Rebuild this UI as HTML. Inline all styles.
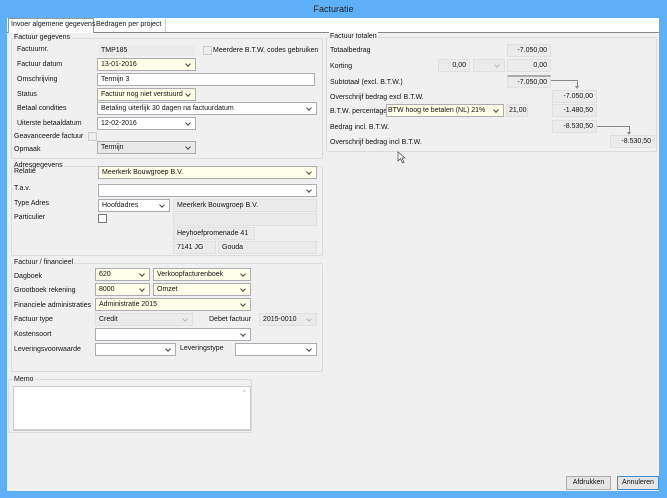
<!DOCTYPE html>
<html><head><meta charset="utf-8"><style>
*{box-sizing:border-box;margin:0;padding:0;white-space:nowrap}
body{width:667px;height:498px;background:#5eb0f6;font-family:"Liberation Sans",sans-serif;font-size:7px;color:#111;position:relative;overflow:hidden}
.a{position:absolute}
.title{left:0;top:0;width:667px;height:18px;text-align:center;line-height:18px;font-size:9px;color:#222}
.tabs{left:7px;top:18px;width:652px;height:14px;background:#fff}
.panel{left:7px;top:32px;width:652px;height:459px;background:#f0f0f0;border-top:1px solid #888}
.tab{top:19px;height:13px;line-height:12px;padding-left:2px;font-size:7px}
.grp{border:1px solid #dcdcdc;border-radius:2px}
.gl{font-size:7px;background:#f0f0f0;padding:0 1px;line-height:9px}
.l{font-size:7px;line-height:10px}
.in{background:#fff;border:1px solid #abadb3;height:13px;line-height:11px;padding-left:3px;font-size:7px;overflow:hidden}
.y{background:#fffee8}
.d{background:#ebebeb;border-color:#e0e0e0}
.r{text-align:right;padding-right:3px}
.sel{padding-right:12px}
.sel::after{content:"";position:absolute;right:5px;top:3px;width:3px;height:3px;border-right:1px solid #444;border-bottom:1px solid #444;transform:rotate(45deg)}
.sel.dd::after{border-color:#bbb}
.cb{width:9px;height:9px;border:1px solid #777;background:#fff}
.cbd{border-color:#ccc;background:#eee}
.btn{height:14px;border:1px solid #adadad;background:#e5e5e5;text-align:center;line-height:12px;font-size:7px}
.ln{background:#888}
</style></head><body>
<div class="a title">Facturatie</div>
<div class="a tabs"></div>
<div class="a panel"></div>
<div class="a tab" style="left:8px;width:86px;background:#fff;border:1px solid #999;border-bottom:none;top:18px;height:15px">Invoer algemene gegevens</div>
<div class="a tab" style="left:94px;width:72px;border-right:1px solid #ccc">Bedragen per project</div>

<div class="a grp" style="left:11px;top:38px;width:312px;height:121px"></div>
<div class="a gl" style="left:13px;top:33px">Factuur gegevens</div>
<div class="a l" style="left:17px;top:45px">Factuurnr.</div>
<div class="a in d" style="left:97px;top:44px;width:99px;border-color:#f0f0f0;background:#ebebeb">TMP185</div>
<div class="a cb cbd" style="left:203px;top:46px"></div>
<div class="a l" style="left:213px;top:46px">Meerdere B.T.W. codes gebruiken</div>
<div class="a l" style="left:17px;top:60px">Factuur datum</div>
<div class="a in y sel" style="left:97px;top:58px;width:99px">13-01-2016</div>
<div class="a l" style="left:17px;top:75px">Omschrijving</div>
<div class="a in" style="left:97px;top:73px;width:218px">Termijn 3</div>
<div class="a l" style="left:17px;top:90px">Status</div>
<div class="a in y sel" style="left:97px;top:88px;width:99px">Factuur nog niet verstuurd</div>
<div class="a l" style="left:17px;top:104px">Betaal condities</div>
<div class="a in sel" style="left:97px;top:102px;width:220px">Betaling uiterlijk 30 dagen na factuurdatum</div>
<div class="a l" style="left:17px;top:119px">Uiterste betaaldatum</div>
<div class="a in sel" style="left:97px;top:117px;width:99px">12-02-2016</div>
<div class="a l" style="left:14px;top:132px">Geavanceerde factuur</div>
<div class="a cb cbd" style="left:88px;top:132px"></div>
<div class="a l" style="left:14px;top:145px">Opmaak</div>
<div class="a in d sel" style="left:97px;top:141px;width:99px;background:#e8e8e8;border-color:#acacac">Termijn</div>

<div class="a grp" style="left:11px;top:166px;width:312px;height:90px"></div>
<div class="a gl" style="left:13px;top:161px">Adresgegevens</div>
<div class="a l" style="left:14px;top:167px">Relatie</div>
<div class="a in y sel" style="left:98px;top:166px;width:219px">Meerkerk Bouwgroep B.V.</div>
<div class="a l" style="left:14px;top:184px">T.a.v.</div>
<div class="a in sel" style="left:98px;top:184px;width:219px"></div>
<div class="a l" style="left:14px;top:199px">Type Adres</div>
<div class="a in sel" style="left:98px;top:199px;width:72px">Hoofdadres</div>
<div class="a in d" style="left:173px;top:199px;width:144px">Meerkerk Bouwgroep B.V.</div>
<div class="a l" style="left:14px;top:213px">Particulier</div>
<div class="a cb" style="left:98px;top:214px"></div>
<div class="a in d" style="left:173px;top:213px;width:144px"></div>
<div class="a in d" style="left:173px;top:227px;width:82px">Heyhoefpromenade 41</div>
<div class="a in d" style="left:173px;top:241px;width:43px">7141 JG</div>
<div class="a in d" style="left:218px;top:241px;width:99px">Gouda</div>

<div class="a grp" style="left:11px;top:263px;width:312px;height:109px"></div>
<div class="a gl" style="left:13px;top:258px">Factuur / financieel</div>
<div class="a l" style="left:14px;top:272px">Dagboek</div>
<div class="a in y sel" style="left:95px;top:268px;width:55px">620</div>
<div class="a in y sel" style="left:153px;top:268px;width:98px">Verkoopfacturenboek</div>
<div class="a l" style="left:14px;top:286px">Grootboek rekening</div>
<div class="a in y sel" style="left:95px;top:283px;width:55px">8000</div>
<div class="a in y sel" style="left:153px;top:283px;width:98px">Omzet</div>
<div class="a l" style="left:14px;top:301px">Financiele administraties</div>
<div class="a in y sel" style="left:95px;top:298px;width:156px">Administratie 2015</div>
<div class="a l" style="left:14px;top:315px">Factuur type</div>
<div class="a in d sel dd" style="left:95px;top:313px;width:98px">Credit</div>
<div class="a l" style="left:209px;top:315px">Debet factuur</div>
<div class="a in d sel dd" style="left:259px;top:313px;width:58px">2015-0010</div>
<div class="a l" style="left:14px;top:330px">Kostensoort</div>
<div class="a in sel" style="left:95px;top:328px;width:156px"></div>
<div class="a l" style="left:14px;top:345px">Leveringsvoorwaarde</div>
<div class="a in sel" style="left:95px;top:343px;width:81px"></div>
<div class="a l" style="left:180px;top:344px">Leveringstype</div>
<div class="a in sel" style="left:235px;top:343px;width:82px"></div>

<div class="a grp" style="left:8px;top:379px;width:244px;height:54px"></div>
<div class="a gl" style="left:13px;top:375px">Memo</div>
<div class="a" style="left:13px;top:386px;width:238px;height:45px;background:#fff;border:1px solid #ccc;border-bottom:2px solid #ccc"></div>
<div class="a" style="left:243px;top:390px;font-size:6px;color:#aaa">^</div>

<div class="a grp" style="left:326px;top:37px;width:331px;height:115px"></div>
<div class="a gl" style="left:329px;top:32px">Factuur totalen</div>
<div class="a l" style="left:330px;top:46px">Totaalbedrag</div>
<div class="a in d r" style="left:507px;top:44px;width:44px">-7.050,00</div>
<div class="a l" style="left:330px;top:62px">Korting</div>
<div class="a in d r" style="left:438px;top:59px;width:32px">0,00</div>
<div class="a in d sel dd" style="left:473px;top:59px;width:32px"></div>
<div class="a in d r" style="left:507px;top:59px;width:44px">0,00</div>
<div class="a l" style="left:330px;top:78px">Subtotaal (excl. B.T.W.)</div>
<div class="a in d r" style="left:507px;top:75px;width:44px;border-top:2px solid #aaa">-7.050,00</div>
<div class="a ln" style="left:551px;top:80px;width:27px;height:1px"></div>
<div class="a ln" style="left:577px;top:80px;width:1px;height:7px"></div>
<div class="a" style="left:575px;top:86px;border-left:2.5px solid transparent;border-right:2.5px solid transparent;border-top:3px solid #888"></div>
<div class="a l" style="left:330px;top:93px">Overschrijf bedrag excl B.T.W.</div>
<div class="a in d r" style="left:552px;top:90px;width:45px">-7.050,00</div>
<div class="a l" style="left:330px;top:107px">B.T.W. percentage</div>
<div class="a in y sel" style="left:386px;top:104px;width:118px;padding-left:1px">BTW hoog te betalen (NL) 21%</div>
<div class="a in d" style="left:506px;top:104px;width:22px;padding-left:2px">21,00</div>
<div class="a in d r" style="left:552px;top:104px;width:45px">-1.480,50</div>
<div class="a l" style="left:330px;top:123px">Bedrag incl. B.T.W.</div>
<div class="a in d r" style="left:552px;top:120px;width:45px">-8.530,50</div>
<div class="a ln" style="left:597px;top:126px;width:33px;height:1px"></div>
<div class="a ln" style="left:629px;top:126px;width:1px;height:7px"></div>
<div class="a" style="left:627px;top:132px;border-left:2.5px solid transparent;border-right:2.5px solid transparent;border-top:3px solid #888"></div>
<div class="a l" style="left:330px;top:138px">Overschrijf bedrag incl B.T.W.</div>
<div class="a in d r" style="left:610px;top:135px;width:45px">-8.530,50</div>

<svg class="a" style="left:397px;top:151px" width="9" height="13" viewBox="0 0 9 13"><path d="M1 1 L1 10 L3.5 7.5 L5.5 12 L7 11.3 L5 7 L8 7 Z" fill="#fff" stroke="#555" stroke-width="0.8"/></svg>

<div class="a btn" style="left:566px;top:476px;width:45px">Afdrukken</div>
<div class="a btn" style="left:617px;top:476px;width:42px;border-color:#3c8fd8">Annuleren</div>
</body></html>
